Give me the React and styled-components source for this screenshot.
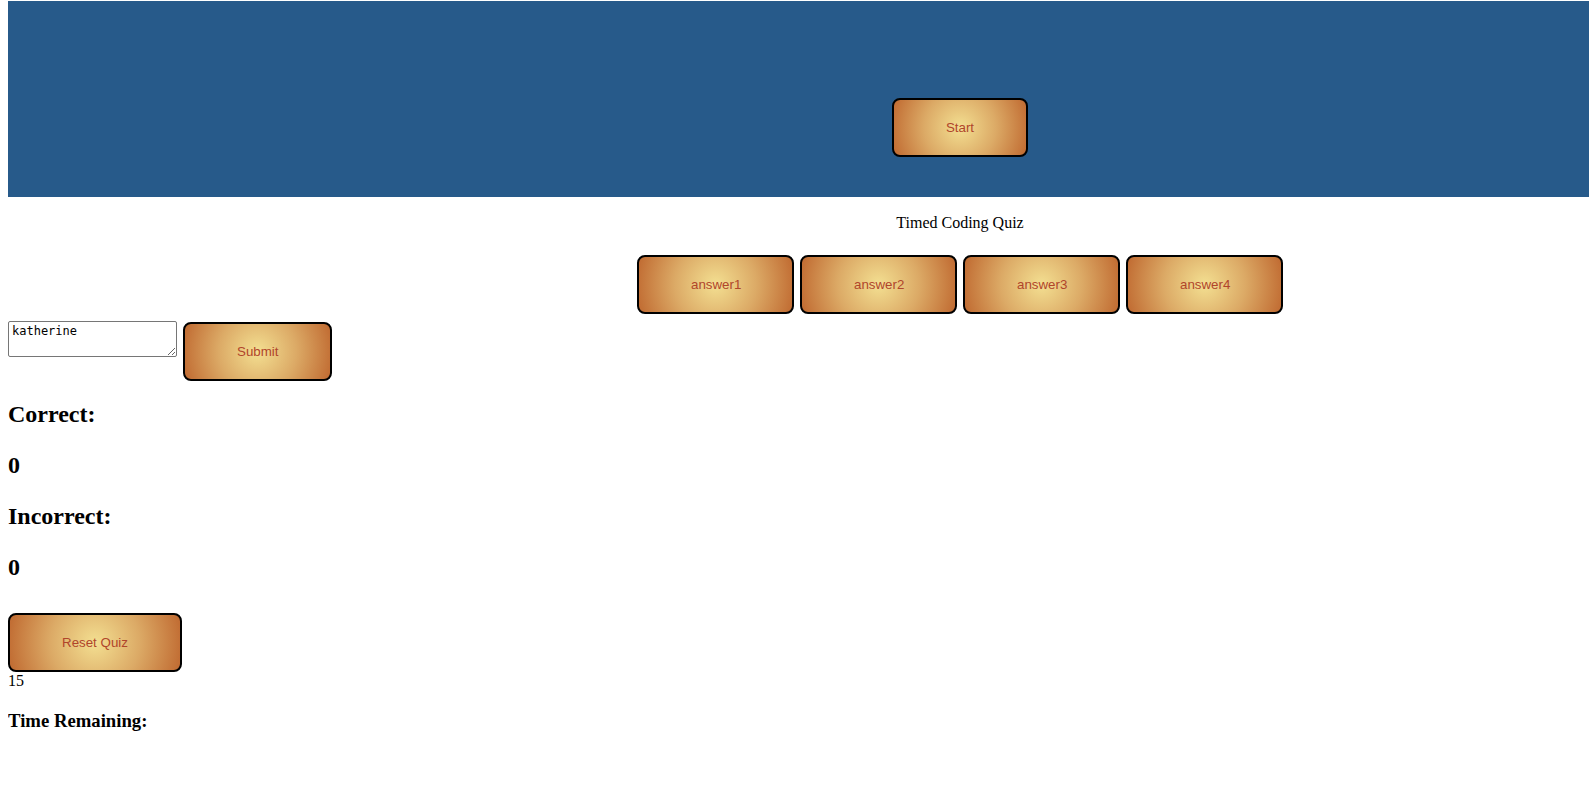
import React, { useState } from 'react';
import styled, { createGlobalStyle } from 'styled-components';

const GlobalStyle = createGlobalStyle`
  html {
    overflow-x: hidden;
  }

  body {
    margin: 1px 0 8px 8px;
    font-family: 'Liberation Serif', 'Times New Roman', serif;
    color: #000;
    background: #fff;
  }
`;

// content on this page is centred on x=960, so the centred blocks get a left pad
const Header = styled.header`
  display: flex;
  justify-content: center;
  align-items: flex-start;
  height: 196px;
  padding: 97px 0 0 323px;
  box-sizing: border-box;
  background: #275a8a;
`;

const QuizButton = styled.button`
  padding: 20px 52px;
  width: ${({ wide }) => (wide ? '157px' : 'auto')};
  height: 59px;
  box-sizing: border-box;
  border: 2px solid #000;
  border-radius: 8px;
  background: radial-gradient(circle at center, #f3df91 0%, #dcaa66 50%, #c06a31 100%);
  color: #b0452b;
  font-family: 'Liberation Sans', Arial, sans-serif;
  font-size: 13.33px;
  cursor: pointer;
`;

const Title = styled.p`
  margin: 17px 0 0;
  padding-left: 323px;
  line-height: 18px;
  font-size: 16px;
  text-align: center;
`;

const AnswerRow = styled.div`
  display: flex;
  justify-content: center;
  gap: 6px;
  margin-top: 23px;
  padding-left: 323px;
`;

const NameRow = styled.div`
  display: flex;
  align-items: flex-start;
  gap: 6px;
`;

const NameInput = styled.textarea`
  width: 169px;
  height: 36px;
  margin-top: 7px;
  box-sizing: border-box;
  padding: 2px 3px;
  border: 1px solid #767676;
  border-radius: 2px;
  font-family: 'DejaVu Sans Mono', 'Liberation Mono', monospace;
  font-size: 12px;
  line-height: 14px;
  color: #000;
`;

const SubmitWrap = styled.div`
  margin-top: 8px;
`;

const Score = styled.h2`
  margin: 17px 0 ${({ last }) => (last ? '30px' : '0')};
  font-size: 24px;
  line-height: 32px;
  font-weight: bold;

  & + & {
    margin-top: 19px;
  }
`;

const Seconds = styled.div`
  font-size: 16px;
  line-height: 18px;
`;

const TimeLabel = styled.h3`
  margin: 20px 0;
  font-size: 18.72px;
  font-weight: bold;
`;

export default function App() {
  const [name, setName] = useState('katherine');

  return (
    <>
      <GlobalStyle />
      <Header>
        <QuizButton>Start</QuizButton>
      </Header>
      <Title>Timed Coding Quiz</Title>
      <AnswerRow>
        <QuizButton wide>answer1</QuizButton>
        <QuizButton wide>answer2</QuizButton>
        <QuizButton wide>answer3</QuizButton>
        <QuizButton wide>answer4</QuizButton>
      </AnswerRow>
      <NameRow>
        <NameInput value={name} onChange={(e) => setName(e.target.value)} />
        <SubmitWrap>
          <QuizButton>Submit</QuizButton>
        </SubmitWrap>
      </NameRow>
      <Score>Correct:</Score>
      <Score>0</Score>
      <Score>Incorrect:</Score>
      <Score last>0</Score>
      <QuizButton>Reset Quiz</QuizButton>
      <Seconds>15</Seconds>
      <TimeLabel>Time Remaining:</TimeLabel>
    </>
  );
}
